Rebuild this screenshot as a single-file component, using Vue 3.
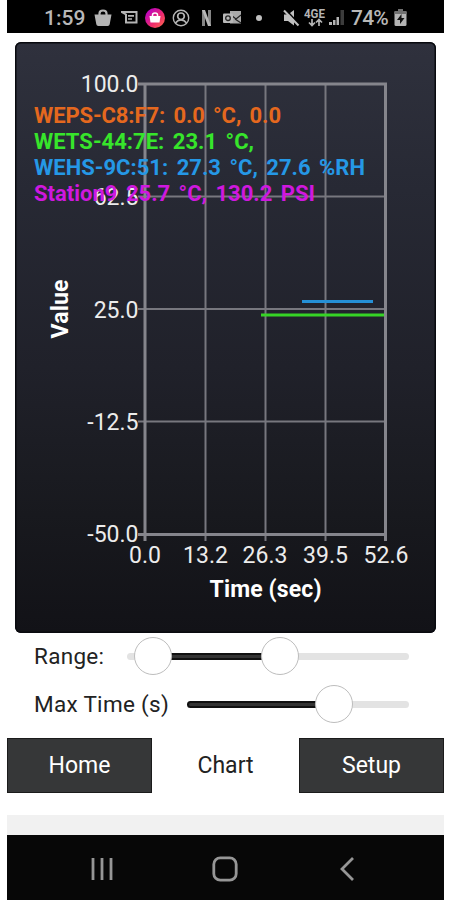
<template>
  <div class="phone">
    <!-- status bar -->
    <div class="status-bar">
      <span class="clock">1:59</span>
      <svg class="icon bag" width="18" height="18" viewBox="0 0 18 18">
        <path d="M0.500 5.500h17l-1.800 9.700q-.3 1.800-2 1.800H4.300q-1.700 0-2-1.800z" fill="#b4b4b4" />
        <path d="M5.500 7V4.500Q5.500 1.500 9 1.500t3.500 3V7" fill="none" stroke="#b4b4b4" stroke-width="2.200" />
      </svg>
      <svg class="icon message" width="17" height="16" viewBox="0 0 17 16">
        <path d="M0.500 2h15v10.500H5V4.500z" fill="none" stroke="#b4b4b4" stroke-width="2" />
        <path d="M7 5.800h6M7 9h4" stroke="#b4b4b4" stroke-width="1.700" />
      </svg>
      <svg class="icon shop" width="20" height="20" viewBox="0 0 20 20">
        <defs>
          <linearGradient id="shop" x1="0" y1="0" x2="1" y2="1">
            <stop offset="0.100" stop-color="#b800c8" />
            <stop offset="0.600" stop-color="#ee2c6c" />
            <stop offset="1" stop-color="#ff704c" />
          </linearGradient>
        </defs>
        <circle cx="10" cy="10" r="10" fill="url(#shop)" />
        <path d="M4.500 8h11l-1 6.500h-9z" fill="#fff" />
        <path d="M7.500 9V7Q7.500 5 10 5t2.500 2v2" fill="none" stroke="#fff" stroke-width="1.500" />
      </svg>
      <svg class="icon account" width="18" height="18" viewBox="0 0 18 18" fill="none" stroke="#b4b4b4">
        <circle cx="9" cy="9" r="7.700" stroke-width="1.400" />
        <circle cx="9" cy="7.300" r="3.300" stroke-width="1.700" />
        <path d="M3.500 14q2-3 5.500-3t5.500 3" stroke-width="1.700" />
      </svg>
      <svg class="icon netflix" width="11" height="18" viewBox="0 0 11 18">
        <path d="M1 1h3v16H1zM7 1h3v16H7z" fill="#858585" />
        <path d="M1 1h3l6 16H7z" fill="#b8b8b8" />
      </svg>
      <svg class="icon outlook" width="20" height="16" viewBox="0 0 20 16">
        <path d="M7 1h11v12.500H7z" fill="#a8a8a8" />
        <path d="M8 5l5 4 5-4M12 9l6 4" fill="none" stroke="#222" stroke-width="1.200" />
        <rect x="0" y="3.500" width="10" height="9.500" rx="1" fill="#b8b8b8" />
        <circle cx="5" cy="8.200" r="2.300" fill="none" stroke="#222" stroke-width="1.300" />
      </svg>
      <span class="dot"></span>
      <svg class="icon mute" width="17" height="18" viewBox="0 0 17 18">
        <path d="M1 5.500h4l6-4.500v15.500l-6-4.500H1z" fill="#c0c0c0" />
        <path d="M3 1l14 15" stroke="#000" stroke-width="1.800" />
        <path d="M1 1.500l14.500 15" stroke="#c0c0c0" stroke-width="2" />
      </svg>
      <svg class="icon lte" width="22" height="19" viewBox="0 0 22 19">
        <text x="0" y="9.500" textLength="21" lengthAdjust="spacingAndGlyphs" font-size="12" font-weight="700" fill="#b4b4b4">4GE</text>
        <path d="M8 11v6M5 14.500l3 3 3-3M15 18v-6M12 14.500l3-3 3 3" fill="none" stroke="#b4b4b4" stroke-width="1.700" />
      </svg>
      <svg class="icon signal" width="16" height="17" viewBox="0 0 16 17">
        <path d="M0 13h3v3H0zM4 11h2.500v5H4zM7.500 8H10v8H7.500z" fill="#b4b4b4" />
        <path d="M11.500 1H15v15h-3.500z" fill="#3c3c3c" />
      </svg>
      <span class="percent">74%</span>
      <svg class="icon battery" width="13" height="18" viewBox="0 0 13 18">
        <path d="M4 0h5v2h-5z" fill="#707070" />
        <rect x="0.500" y="2" width="12" height="15" rx="1.500" fill="#b4b4b4" />
        <path d="M0.500 2h12v3h-12z" fill="#707070" />
        <path d="M7.500 5L3 11h3v4l4.500-6h-3z" fill="#111" />
      </svg>
    </div>

    <!-- chart -->
    <div class="chart-card">
      <svg width="421" height="591" viewBox="15 42 421 591">
        <g stroke="#77777e" stroke-width="2">
          <line v-for="x in [205.500, 265.500, 325.500]" :key="x" :x1="x" :x2="x" y1="84" y2="541" />
          <line v-for="y in [196.500, 309, 421.500]" :key="y" x1="138" x2="385" :y1="y" :y2="y" />
        </g>
        <path d="M138 84H385.500V541M138 534.500H385.500M145 83V541" class="frame" />

        <g class="tick" text-anchor="end">
          <text v-for="t in yTicks" :key="t.label" x="138.500" :y="t.y">{{ t.label }}</text>
        </g>
        <g class="tick" text-anchor="middle">
          <text v-for="t in xTicks" :key="t.label" :x="t.x" y="562.500">{{ t.label }}</text>
        </g>

        <text class="axis-title" x="265.500" y="596.500" text-anchor="middle" textLength="112">Time (sec)</text>
        <text class="axis-title" transform="translate(67.500 309) rotate(-90)" text-anchor="middle" textLength="59">Value</text>

        <path d="M302 301.500H373" stroke="#2590d6" stroke-width="3" />
        <path d="M261 315H384" stroke="#36d426" stroke-width="3" />

        <text
          v-for="s in sensors"
          :key="s.text"
          class="legend"
          x="34"
          :y="s.y"
          :fill="s.color"
          :textLength="s.width"
        >{{ s.text }}</text>
      </svg>
    </div>

    <!-- sliders -->
    <div class="slider-row">
      <span class="range-label">Range:</span>
      <div class="track range-track">
        <div class="fill" :style="{ left: '26px', width: '127px' }"></div>
        <div class="thumb" :style="{ left: '26px' }"></div>
        <div class="thumb" :style="{ left: '153px' }"></div>
      </div>
    </div>
    <div class="slider-row">
      <span class="time-label">Max Time (s)</span>
      <div class="track">
        <div class="fill" :style="{ left: '0px', width: '147px' }"></div>
        <div class="thumb" :style="{ left: '147px' }"></div>
      </div>
    </div>

    <!-- tabs -->
    <div class="tabs">
      <div
        v-for="tab in tabs"
        :key="tab"
        :class="['tab', { active: tab === currentTab }]"
        @click="currentTab = tab"
      >{{ tab }}</div>
    </div>

    <div class="strip"></div>

    <!-- android navigation -->
    <div class="nav-bar">
      <svg width="24" height="26" viewBox="0 0 24 26">
        <path d="M3 2v22M12 2v22M21 2v22" stroke="#969696" stroke-width="2.800" />
      </svg>
      <svg class="home" width="26" height="26" viewBox="0 0 26 26">
        <rect x="1.800" y="1.800" width="22.400" height="22.400" rx="6.500" fill="none" stroke="#969696" stroke-width="2.800" />
      </svg>
      <svg width="16" height="26" viewBox="0 0 16 26">
        <path d="M14 2L3 13l11 11" fill="none" stroke="#969696" stroke-width="2.800" />
      </svg>
    </div>
  </div>
</template>

<script setup>
import { ref } from 'vue';

const tabs = ['Home', 'Chart', 'Setup'];
const currentTab = ref('Chart');

const yTicks = [
  { label: '100.0', y: 92 },
  { label: '62.5', y: 204.5 },
  { label: '25.0', y: 317.5 },
  { label: '-12.5', y: 429.5 },
  { label: '-50.0', y: 542 }
];

const xTicks = [
  { label: '0.0', x: 145 },
  { label: '13.2', x: 205.5 },
  { label: '26.3', x: 265 },
  { label: '39.5', x: 325.5 },
  { label: '52.6', x: 386 }
];

// latest reading of each sensor
const sensors = [
  { text: 'WEPS-C8:F7: 0.0 °C, 0.0', y: 122.5, width: 247, color: '#e5681e' },
  { text: 'WETS-44:7E: 23.1 °C,', y: 148.5, width: 220, color: '#37e52b' },
  { text: 'WEHS-9C:51: 27.3 °C, 27.6 %RH', y: 174.5, width: 331, color: '#2598e6' },
  { text: 'Station9 25.7 °C, 130.2 PSI', y: 200.5, width: 281, color: '#cf18df' }
];
</script>

<style>
body {
  margin: 0;
  background: #fff;
}
</style>

<style scoped>
.phone {
  width: 437px;
  height: 900px;
  margin-left: 7px;
  display: flex;
  flex-direction: column;
  font-family: Roboto, "Liberation Sans", sans-serif;
  background: #fff;
  overflow: hidden;
}

.status-bar {
  height: 33px;
  flex: none;
  background: #000;
  display: flex;
  align-items: center;
  padding: 2px 0 0 37px;
  box-sizing: border-box;
  color: #b8b8b8;
  font-size: 21px;
  font-weight: 500;
}

.icon {
  flex: none;
}

.clock {
  width: 50px;
}

.message {
  margin-left: 9px;
}

.shop {
  margin-left: 7px;
}

.account {
  margin-left: 7px;
}

.netflix {
  margin-left: 11px;
}

.outlook {
  margin-left: 11px;
}

.dot {
  width: 6px;
  height: 6px;
  margin-left: 13px;
  border-radius: 50%;
  background: #c0c0c0;
}

.mute {
  margin-left: 21px;
}

.lte {
  margin-left: 4px;
}

.signal {
  margin-left: 3px;
}

.percent {
  width: 43px;
  margin-left: 6px;
  letter-spacing: -0.8px;
}

.chart-card {
  flex: none;
  height: 591px;
  margin: 9px 8px 0;
  border-radius: 6px;
  background: linear-gradient(#2f313d, #272934 25%, #20212a 55%, #18191e 80%, #121217);
  box-shadow: inset 0 0 0 1.5px #090a0f;
}

.chart-card svg {
  display: block;
}

.frame {
  fill: none;
  stroke: #85858c;
  stroke-width: 3;
}

.tick {
  fill: #ececec;
  font-size: 23px;
}

.axis-title {
  fill: #fff;
  font-size: 23px;
  font-weight: 700;
}

.legend {
  font-size: 22px;
  font-weight: 700;
  word-spacing: 3px;
}

.slider-row {
  flex: none;
  height: 48px;
  padding: 0 35px 0 27px;
  display: flex;
  align-items: center;
  justify-content: space-between;
  font-size: 22.5px;
  color: #222;
}

.slider-row span {
  white-space: nowrap;
}

.chart-card + .slider-row {
  margin-top: -1px;
}

.range-label {
  letter-spacing: 0.3px;
}

.time-label {
  letter-spacing: 0.3px;
}

.track {
  position: relative;
  width: 222px;
  height: 7px;
  border-radius: 4px;
  background: #e3e3e3;
}

.range-track {
  width: 282px;
}

.fill {
  position: absolute;
  top: 0;
  height: 7px;
  border-radius: 4px;
  box-sizing: border-box;
  border: 2px solid #111;
  background: #333;
}

.thumb {
  position: absolute;
  top: -16px;
  width: 38px;
  height: 38px;
  margin-left: -19px;
  box-sizing: border-box;
  border: 1px solid #bdbdbd;
  border-radius: 50%;
  background: #fff;
}

.tabs {
  flex: none;
  height: 55px;
  margin-top: 10px;
  display: grid;
  grid-template-columns: 145px 147px 145px;
}

.tab {
  display: flex;
  align-items: center;
  justify-content: center;
  box-sizing: border-box;
  border: 1px solid #1b1b1b;
  background: #363738;
  color: #fff;
  font-size: 23px;
}

.tab.active {
  border-color: #fff;
  background: #fff;
  color: #222;
}

.strip {
  flex: none;
  height: 20px;
  margin-top: 22px;
  background: #f1f1f1;
}

.nav-bar {
  flex: 1;
  background: #070707;
  display: flex;
  align-items: center;
  justify-content: space-between;
  padding: 3px 89px 0 83px;
}

.home {
  margin-right: 4px;
}
</style>
